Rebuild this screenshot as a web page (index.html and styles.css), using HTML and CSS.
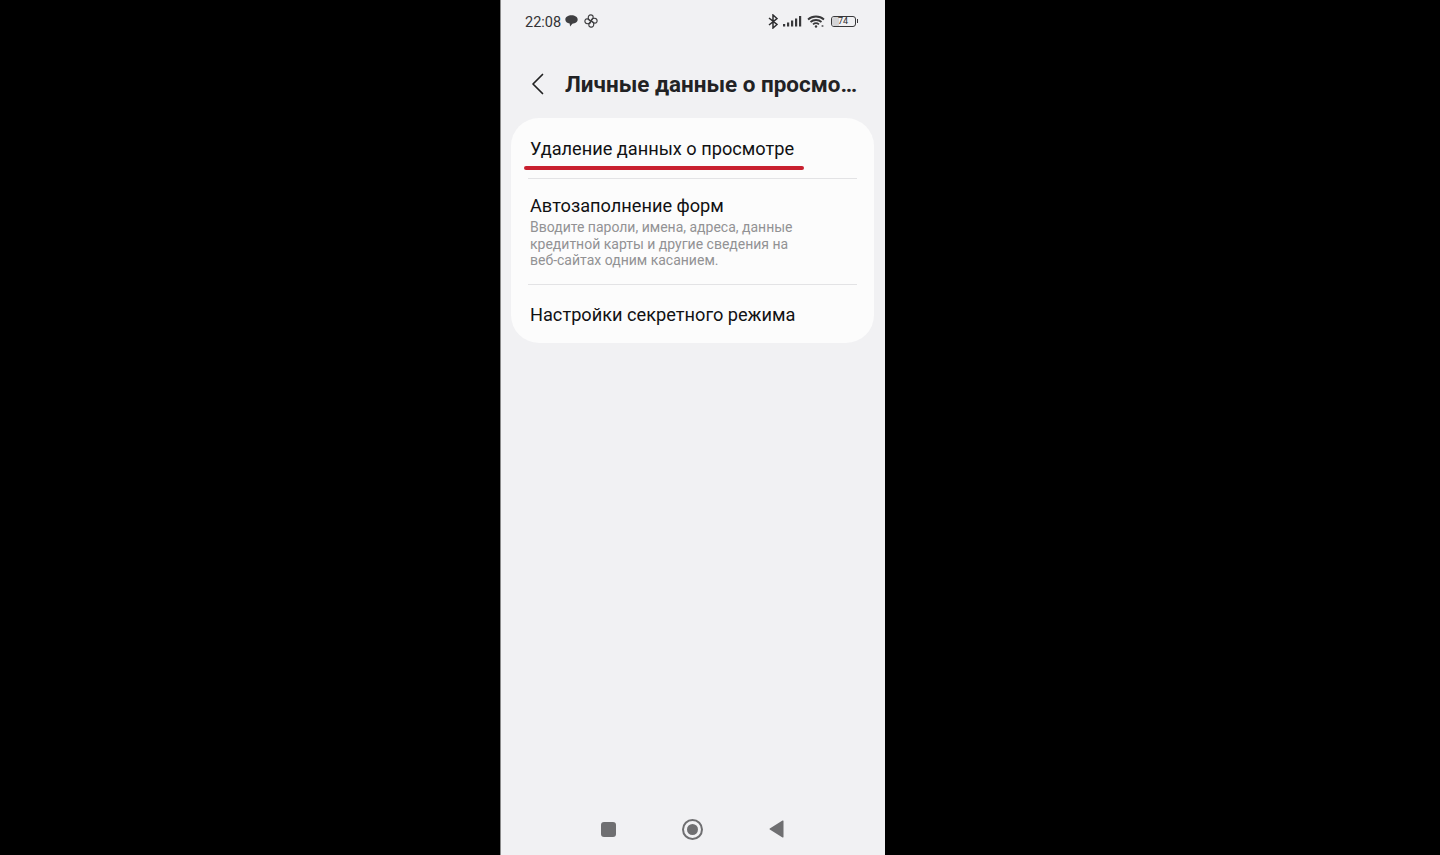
FILE: index.html
```html
<!DOCTYPE html>
<html lang="ru">
<head>
<meta charset="utf-8">
<title>Личные данные о просмотре</title>
<link rel="stylesheet" href="styles.css">
</head>
<body>
<main class="phone">
  <header class="status">
    <div class="status-left">
      <span class="time">22:08</span>
      <svg class="ic-chat" viewBox="0 0 12 11" width="13" height="12"><path fill="#3f3f41" d="M6 .3c3.200 0 5.700 1.500 5.700 3.900S9.200 8 6.800 8L4.700 10.600 4.300 7.900C2 7.500.3 6.200.3 4.200.3 1.800 2.800.3 6 .3z"/></svg>
      <svg class="ic-fan" viewBox="0 0 14 14" width="14" height="14" fill="none" stroke="#3f3f41" stroke-width="1.200" stroke-linejoin="round"><path d="M7 7C5.300 6.600 4 5.200 4.300 3 4.600 1 6.500.6 7.900 1.100 9.500 1.700 9.400 3.800 8.600 4.900 8.100 5.700 7.500 6.300 7 7z"/><path d="M7 7c.4-1.700 1.800-3 4-2.700 2 .3 2.400 2.200 1.900 3.600-.6 1.600-2.700 1.500-3.800.7C8.300 8.100 7.700 7.500 7 7z"/><path d="M7 7c1.700.4 3 1.800 2.700 4-.3 2-2.200 2.400-3.600 1.900-1.600-.6-1.500-2.700-.7-3.800C5.900 8.300 6.500 7.700 7 7z"/><path d="M7 7c-.4 1.700-1.800 3-4 2.700C1 9.400.6 7.500 1.100 6.100 1.700 4.500 3.800 4.600 4.900 5.400 5.700 5.900 6.300 6.500 7 7z"/></svg>
    </div>
    <div class="status-right">
      <svg viewBox="0 0 10 15" width="10" height="15" fill="none" stroke="#2c2c2e" stroke-width="1.500"><path d="M1 4l8 6.500L5 14V1l4 3.500L1 11"/></svg>
      <svg viewBox="0 0 19 11" width="19" height="11" fill="#38383a"><rect x="0" y="8" width="2.200" height="2.500"/><rect x="4" y="6.500" width="2.200" height="4"/><rect x="8" y="4.500" width="2.200" height="6"/><rect x="12" y="2.500" width="2.200" height="8"/><rect x="16" y="0" width="2.200" height="10.500"/></svg>
      <svg viewBox="0 0 19 13" width="19" height="13" fill="none" stroke="#38383a" stroke-width="1.800"><path d="M1 4.500C5.500.5 12.500.5 17 4.500"/><path d="M3.500 7C6.500 4.300 11.500 4.300 14.500 7"/><path d="M6 9.400c1.800-1.500 4.200-1.500 6 0"/><circle cx="9" cy="11.500" r="1.200" fill="#38383a" stroke="none"/><circle cx="15.500" cy="11" r="1.100" fill="#6a6a6c" stroke="none"/></svg>
      <div class="battery"><span class="battery-body"><span class="battery-fill"></span><span class="battery-num">74</span></span><span class="battery-tip"></span></div>
    </div>
  </header>

  <nav class="appbar">
    <svg class="back" viewBox="0 0 14 22" width="14" height="22" fill="none" stroke="#222" stroke-width="1.700" stroke-linecap="round" stroke-linejoin="round"><path d="M11.500 1.500L2 11l9.500 9.500"/></svg>
    <h1 class="title">Личные данные о просмо…</h1>
  </nav>

  <section class="card">
    <div class="row row-first">
      <div class="row-title">Удаление данных о просмотре</div>
      <div class="mark"></div>
    </div>
    <div class="row row-mid">
      <div class="row-title">Автозаполнение форм</div>
      <div class="row-sub">Вводите пароли, имена, адреса, данные<br>кредитной карты и другие сведения на<br>веб-сайтах одним касанием.</div>
    </div>
    <div class="row row-last">
      <div class="row-title">Настройки секретного режима</div>
    </div>
  </section>

  <footer class="navbar">
    <span class="nav-square"></span>
    <span class="nav-circle"><span class="nav-dot"></span></span>
    <svg viewBox="0 0 15 18" width="15" height="18"><path fill="#6f6f71" d="M14.500 1v16a.6.6 0 0 1-1 .4L.8 9.500a.6.6 0 0 1 0-1L13.500.6a.6.6 0 0 1 1 .4z"/></svg>
  </footer>
</main>
</body>
</html>
```

FILE: styles.css
```css
* { box-sizing: border-box; }
html, body { margin: 0; height: 100%; background: #000; }
body { font-family: Roboto, "Liberation Sans", sans-serif; overflow: hidden; }
.phone {
  width: 385px;
  height: 855px;
  margin-left: 500px;
  background: #f1f1f3;
  border-left: 1px solid #8a8a8a;
  display: flex;
  flex-direction: column;
}
.status {
  height: 42px;
  padding: 0 27px 0 24px;
  display: flex;
  justify-content: space-between;
  align-items: center;
  color: #333335;
}
.status-left { display: flex; align-items: center; gap: 4px; }
.time { font-size: 14.500px; padding-top: 2px; }
.ic-fan { margin-left: 2px; }
.status-right { display: flex; align-items: center; gap: 5px; }
.battery { display: flex; align-items: center; gap: 1px; }
.battery-body {
  position: relative;
  width: 25px;
  height: 11px;
  border: 1px solid #38383a;
  border-radius: 3px;
  display: flex;
  align-items: center;
  justify-content: center;
  overflow: hidden;
}
.battery-fill { position: absolute; left: 0; top: 0; bottom: 0; width: 7px; background: #d4d4d6; }
.battery-num { position: relative; font-size: 9px; line-height: 1; color: #2c2c2e; }
.battery-tip { width: 1.500px; height: 4px; background: #38383a; }
.appbar {
  height: 76px;
  padding: 8px 0 0 30px;
  display: flex;
  align-items: center;
  gap: 20px;
}
.back { flex: none; }
.title {
  margin: 0;
  font-size: 22.450px;
  font-weight: 700;
  color: #222224;
  white-space: nowrap;
}
.card {
  margin: 0 11px 0 10px;
  height: 225px;
  background: #fcfcfc;
  border-radius: 28px;
  display: flex;
  flex-direction: column;
}
.row { margin: 0 17px; padding: 0 0 0 2px; }
.row-first { height: 61px; padding-top: 19px; position: relative; border-bottom: 1px solid #e3e3e5; }
.row-mid { height: 106px; padding-top: 15px; border-bottom: 1px solid #e3e3e5; }
.row-last { padding-top: 18px; }
.row-title { font-size: 18.200px; line-height: 24px; color: #111113; white-space: nowrap; }
.row-sub { font-size: 14px; line-height: 16.500px; color: #929294; margin-top: 1px; }
.mark {
  position: absolute;
  left: -4px;
  top: 48px;
  width: 280px;
  height: 4px;
  border-radius: 2px;
  background: #c8202f;
}
.navbar {
  margin-top: auto;
  height: 52px;
  padding: 0 1px 0 0;
  display: flex;
  justify-content: center;
  align-items: center;
  gap: 66px;
}
.nav-square { width: 15px; height: 15px; border-radius: 3px; background: #6f6f71; }
.nav-circle {
  width: 21px;
  height: 21px;
  border: 2.500px solid #6f6f71;
  border-radius: 50%;
  display: flex;
  align-items: center;
  justify-content: center;
}
.nav-dot { width: 11px; height: 11px; border-radius: 50%; background: #6f6f71; }
```
